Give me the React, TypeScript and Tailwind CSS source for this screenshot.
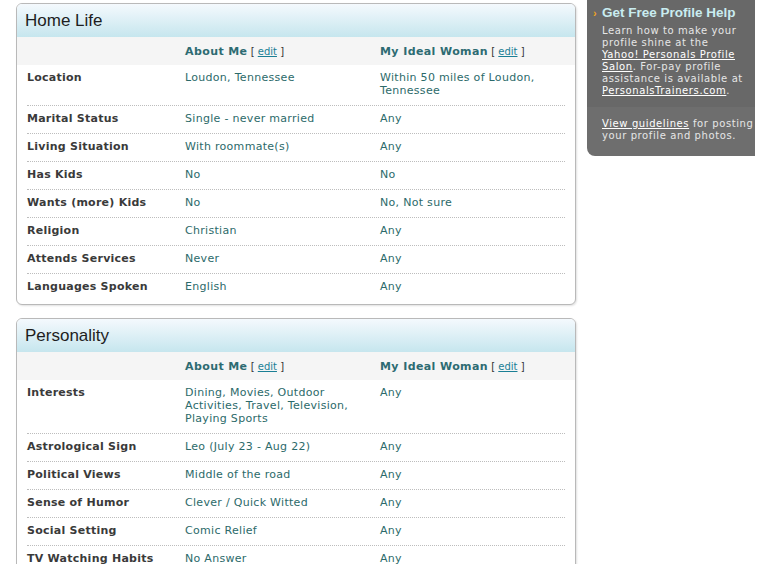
import React from "react";

type Row = {
  label: string;
  me: string;
  ideal: string;
};

const homeLife: Row[] = [
  { label: "Location", me: "Loudon, Tennessee", ideal: "Within 50 miles of Loudon, Tennessee" },
  { label: "Marital Status", me: "Single - never married", ideal: "Any" },
  { label: "Living Situation", me: "With roommate(s)", ideal: "Any" },
  { label: "Has Kids", me: "No", ideal: "No" },
  { label: "Wants (more) Kids", me: "No", ideal: "No, Not sure" },
  { label: "Religion", me: "Christian", ideal: "Any" },
  { label: "Attends Services", me: "Never", ideal: "Any" },
  { label: "Languages Spoken", me: "English", ideal: "Any" },
];

const personality: Row[] = [
  { label: "Interests", me: "Dining, Movies, Outdoor Activities, Travel, Television, Playing Sports", ideal: "Any" },
  { label: "Astrological Sign", me: "Leo (July 23 - Aug 22)", ideal: "Any" },
  { label: "Political Views", me: "Middle of the road", ideal: "Any" },
  { label: "Sense of Humor", me: "Clever / Quick Witted", ideal: "Any" },
  { label: "Social Setting", me: "Comic Relief", ideal: "Any" },
  { label: "TV Watching Habits", me: "No Answer", ideal: "Any" },
];

function Edit() {
  return (
    <span className="font-normal text-[10px] tracking-normal text-[#333]">
      {" "}[ <a className="underline text-[#1a7f95] cursor-pointer">edit</a> ]
    </span>
  );
}

function Section({ title, rows }: { title: string; rows: Row[] }) {
  return (
    <div className="border border-[#b9b9b9] rounded-[6px] bg-white shadow-[1px_1px_2px_rgba(0,0,0,0.12)] overflow-hidden">
      <div className="h-[33px] flex items-center px-[8px] bg-gradient-to-b from-[#f4f9fd] to-[#c6e6ee]">
        <h2 className="text-[17px] text-[#1e1e1e] font-['Liberation_Sans',Arial,sans-serif] leading-none mt-[-1px]">
          {title}
        </h2>
      </div>
      <div className="h-[28px] bg-[#f5f5f5] px-[10px] pt-[3px] grid grid-cols-[158px_195px_1fr] items-center font-bold text-[11px] tracking-[0.4px] text-[#2d6b72]">
        <div />
        <div>
          About Me<Edit />
        </div>
        <div>
          My Ideal Woman<Edit />
        </div>
      </div>
      <div className="px-[10px] pb-[3px]">
        {rows.map((r, i) => (
          <div
            key={r.label}
            className={
              "grid grid-cols-[158px_195px_1fr] pt-[6px] pb-[8px] leading-[13px] text-[11px] tracking-[0.3px] " +
              (i < rows.length - 1 ? "border-b border-dotted border-[#bdbdbd]" : "")
            }
          >
            <div className="font-bold text-[#3a3a3a] tracking-[0.25px]">{r.label}</div>
            <div className="text-[#2c6a6a] pr-[12px]">{r.me}</div>
            <div className="text-[#2c6a6a] pr-[20px]">{r.ideal}</div>
          </div>
        ))}
      </div>
    </div>
  );
}

export default function App() {
  return (
    <div className="w-[767px] h-[564px] overflow-hidden bg-white font-['DejaVu_Sans',Verdana,sans-serif] flex items-start">
      <div className="ml-[16px] mt-[3px] w-[560px] flex flex-col gap-[13px]">
        <Section title="Home Life" rows={homeLife} />
        <Section title="Personality" rows={personality} />
      </div>
      <div className="ml-[11px] w-[168px] text-[10px] leading-[12px] tracking-[0.6px] text-[#e6e6e6] whitespace-nowrap">
        <div className="bg-[#686868] pl-[15px] pr-[4px] pt-[5px] pb-[10px]">
          <div className="relative font-['Liberation_Sans',Arial,sans-serif] font-bold text-[13.5px] leading-[16px] tracking-normal text-[#c9ecf0] mb-[4px]">
            <span className="absolute -left-[9px] top-0 text-[#f0a323] text-[11px]">›</span>
            Get Free Profile Help
          </div>
          <p>
            Learn how to make your
            <br />
            profile shine at the
            <br />
            <a className="underline text-white">Yahoo! Personals Profile</a>
            <br />
            <a className="underline text-white">Salon</a>. For-pay profile
            <br />
            assistance is available at
            <br />
            <a className="underline text-white">PersonalsTrainers.com</a>.
          </p>
        </div>
        <div className="bg-[#6e6e6e] pl-[15px] pr-[4px] pt-[11px] pb-[14px] rounded-bl-[8px]">
          <p>
            <a className="underline text-white">View guidelines</a> for posting
            <br />
            your profile and photos.
          </p>
        </div>
      </div>
    </div>
  );
}
